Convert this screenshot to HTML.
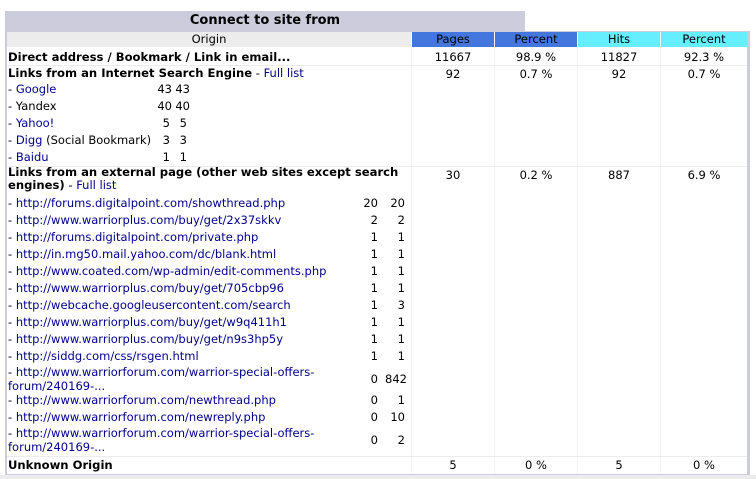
<!DOCTYPE html>
<html><head><meta charset="utf-8"><style>
body{margin:0;background:#fff;width:756px;height:479px;overflow:hidden;position:relative;font-family:"DejaVu Sans","Liberation Sans",sans-serif;font-size:11.5px;color:#000}
.a{position:absolute;white-space:nowrap;line-height:17px}
.b{font-weight:bold;font-size:11.6px}
.l{color:#000088}
.c{text-align:center}
.r{text-align:right}
.h{position:absolute;height:1px;background:#ececec}
</style></head><body>
<div style="position:absolute;left:5px;top:11px;width:520px;height:20px;background:#ccccdd"></div>
<div class="a c" style="left:5px;top:12px;width:520px;font-size:13px;line-height:18px;font-weight:bold">Connect to site from</div>
<div style="position:absolute;left:5px;top:31px;width:745px;height:444px;background:#ccccdd"></div>
<div style="position:absolute;left:7px;top:32px;width:740px;height:442px;background:#fff"></div>
<div class="a c" style="left:7px;top:32px;width:404px;height:15px;line-height:15px;background:#ececec">Origin</div>
<div class="a c" style="left:412px;top:32px;width:82px;height:15px;line-height:15px;background:#4477dd">Pages</div>
<div class="a c" style="left:495px;top:32px;width:82px;height:15px;line-height:15px;background:#4477dd">Percent</div>
<div class="a c" style="left:578px;top:32px;width:82px;height:15px;line-height:15px;background:#66eeff">Hits</div>
<div class="a c" style="left:661px;top:32px;width:86px;height:15px;line-height:15px;background:#66eeff">Percent</div>
<div style="position:absolute;left:494px;top:48px;width:1px;height:426px;background:#f4f4f4"></div>
<div style="position:absolute;left:577px;top:48px;width:1px;height:426px;background:#f4f4f4"></div>
<div style="position:absolute;left:660px;top:48px;width:1px;height:426px;background:#f4f4f4"></div>
<div style="position:absolute;left:411px;top:48px;width:1px;height:426px;background:#f4f4f4"></div>
<div class="h" style="left:7px;top:65px;width:740px"></div>
<div class="h" style="left:7px;top:166px;width:740px"></div>
<div class="h" style="left:7px;top:456px;width:740px"></div>
<div class="a b" style="left:8px;top:49px">Direct address / Bookmark / Link in email...</div>
<div class="a c" style="left:412px;top:49px;width:82px">11667</div>
<div class="a c" style="left:495px;top:49px;width:82px">98.9 %</div>
<div class="a c" style="left:578px;top:49px;width:82px">11827</div>
<div class="a c" style="left:661px;top:49px;width:86px">92.3 %</div>
<div class="a" style="left:8px;top:65px"><b class="b">Links from an Internet Search Engine</b> - <span class="l">Full list</span></div>
<div class="a c" style="left:412px;top:66px;width:82px">92</div>
<div class="a c" style="left:495px;top:66px;width:82px">0.7 %</div>
<div class="a c" style="left:578px;top:66px;width:82px">92</div>
<div class="a c" style="left:661px;top:66px;width:86px">0.7 %</div>
<div class="a" style="left:8px;top:81px">- <span class="l">Google</span></div><div class="a r" style="left:140px;top:81px;width:32px">43</div><div class="a r" style="left:160px;top:81px;width:30px">43</div>
<div class="a" style="left:8px;top:98px">- Yandex</div><div class="a r" style="left:140px;top:98px;width:32px">40</div><div class="a r" style="left:160px;top:98px;width:30px">40</div>
<div class="a" style="left:8px;top:115px">- <span class="l">Yahoo!</span></div><div class="a r" style="left:140px;top:115px;width:30px">5</div><div class="a r" style="left:160px;top:115px;width:27px">5</div>
<div class="a" style="left:8px;top:132px">- <span class="l">Digg</span> (Social Bookmark)</div><div class="a r" style="left:140px;top:132px;width:30px">3</div><div class="a r" style="left:160px;top:132px;width:27px">3</div>
<div class="a" style="left:8px;top:149px">- <span class="l">Baidu</span></div><div class="a r" style="left:140px;top:149px;width:30px">1</div><div class="a r" style="left:160px;top:149px;width:27px">1</div>
<div class="a" style="left:8px;top:166px;line-height:13px"><b class="b">Links from an external page (other web sites except search<br>engines)</b> - <span class="l">Full list</span></div>
<div class="a c" style="left:412px;top:167px;width:82px">30</div>
<div class="a c" style="left:495px;top:167px;width:82px">0.2 %</div>
<div class="a c" style="left:578px;top:167px;width:82px">887</div>
<div class="a c" style="left:661px;top:167px;width:86px">6.9 %</div>
<div class="a" style="left:8px;top:195px">- <span class="l">http://forums.digitalpoint.com/showthread.php</span></div><div class="a r" style="left:350px;top:195px;width:28px">20</div><div class="a r" style="left:380px;top:195px;width:25px">20</div>
<div class="a" style="left:8px;top:212px">- <span class="l">http://www.warriorplus.com/buy/get/2x37skkv</span></div><div class="a r" style="left:350px;top:212px;width:28px">2</div><div class="a r" style="left:380px;top:212px;width:25px">2</div>
<div class="a" style="left:8px;top:229px">- <span class="l">http://forums.digitalpoint.com/private.php</span></div><div class="a r" style="left:350px;top:229px;width:28px">1</div><div class="a r" style="left:380px;top:229px;width:25px">1</div>
<div class="a" style="left:8px;top:246px">- <span class="l">http://in.mg50.mail.yahoo.com/dc/blank.html</span></div><div class="a r" style="left:350px;top:246px;width:28px">1</div><div class="a r" style="left:380px;top:246px;width:25px">1</div>
<div class="a" style="left:8px;top:263px">- <span class="l">http://www.coated.com/wp-admin/edit-comments.php</span></div><div class="a r" style="left:350px;top:263px;width:28px">1</div><div class="a r" style="left:380px;top:263px;width:25px">1</div>
<div class="a" style="left:8px;top:280px">- <span class="l">http://www.warriorplus.com/buy/get/705cbp96</span></div><div class="a r" style="left:350px;top:280px;width:28px">1</div><div class="a r" style="left:380px;top:280px;width:25px">1</div>
<div class="a" style="left:8px;top:297px">- <span class="l">http://webcache.googleusercontent.com/search</span></div><div class="a r" style="left:350px;top:297px;width:28px">1</div><div class="a r" style="left:380px;top:297px;width:25px">3</div>
<div class="a" style="left:8px;top:314px">- <span class="l">http://www.warriorplus.com/buy/get/w9q411h1</span></div><div class="a r" style="left:350px;top:314px;width:28px">1</div><div class="a r" style="left:380px;top:314px;width:25px">1</div>
<div class="a" style="left:8px;top:331px">- <span class="l">http://www.warriorplus.com/buy/get/n9s3hp5y</span></div><div class="a r" style="left:350px;top:331px;width:28px">1</div><div class="a r" style="left:380px;top:331px;width:25px">1</div>
<div class="a" style="left:8px;top:348px">- <span class="l">http://siddg.com/css/rsgen.html</span></div><div class="a r" style="left:350px;top:348px;width:28px">1</div><div class="a r" style="left:380px;top:348px;width:25px">1</div>
<div class="a" style="left:8px;top:365px;line-height:14px">- <span class="l">http://www.warriorforum.com/warrior-special-offers-<br>forum/240169-...</span></div><div class="a r" style="left:350px;top:371px;width:28px">0</div><div class="a r" style="left:380px;top:371px;width:27px">842</div>
<div class="a" style="left:8px;top:392px">- <span class="l">http://www.warriorforum.com/newthread.php</span></div><div class="a r" style="left:350px;top:392px;width:28px">0</div><div class="a r" style="left:380px;top:392px;width:25px">1</div>
<div class="a" style="left:8px;top:409px">- <span class="l">http://www.warriorforum.com/newreply.php</span></div><div class="a r" style="left:350px;top:409px;width:28px">0</div><div class="a r" style="left:380px;top:409px;width:25px">10</div>
<div class="a" style="left:8px;top:426px;line-height:14px">- <span class="l">http://www.warriorforum.com/warrior-special-offers-<br>forum/240169-...</span></div><div class="a r" style="left:350px;top:432px;width:28px">0</div><div class="a r" style="left:380px;top:432px;width:25px">2</div>
<div class="a b" style="left:8px;top:457px">Unknown Origin</div>
<div class="a c" style="left:412px;top:457px;width:82px">5</div>
<div class="a c" style="left:495px;top:457px;width:82px">0 %</div>
<div class="a c" style="left:578px;top:457px;width:82px">5</div>
<div class="a c" style="left:661px;top:457px;width:86px">0 %</div>
<div style="position:absolute;left:0;top:475px;width:756px;height:4px;background:#ececec"></div>
</body></html>
